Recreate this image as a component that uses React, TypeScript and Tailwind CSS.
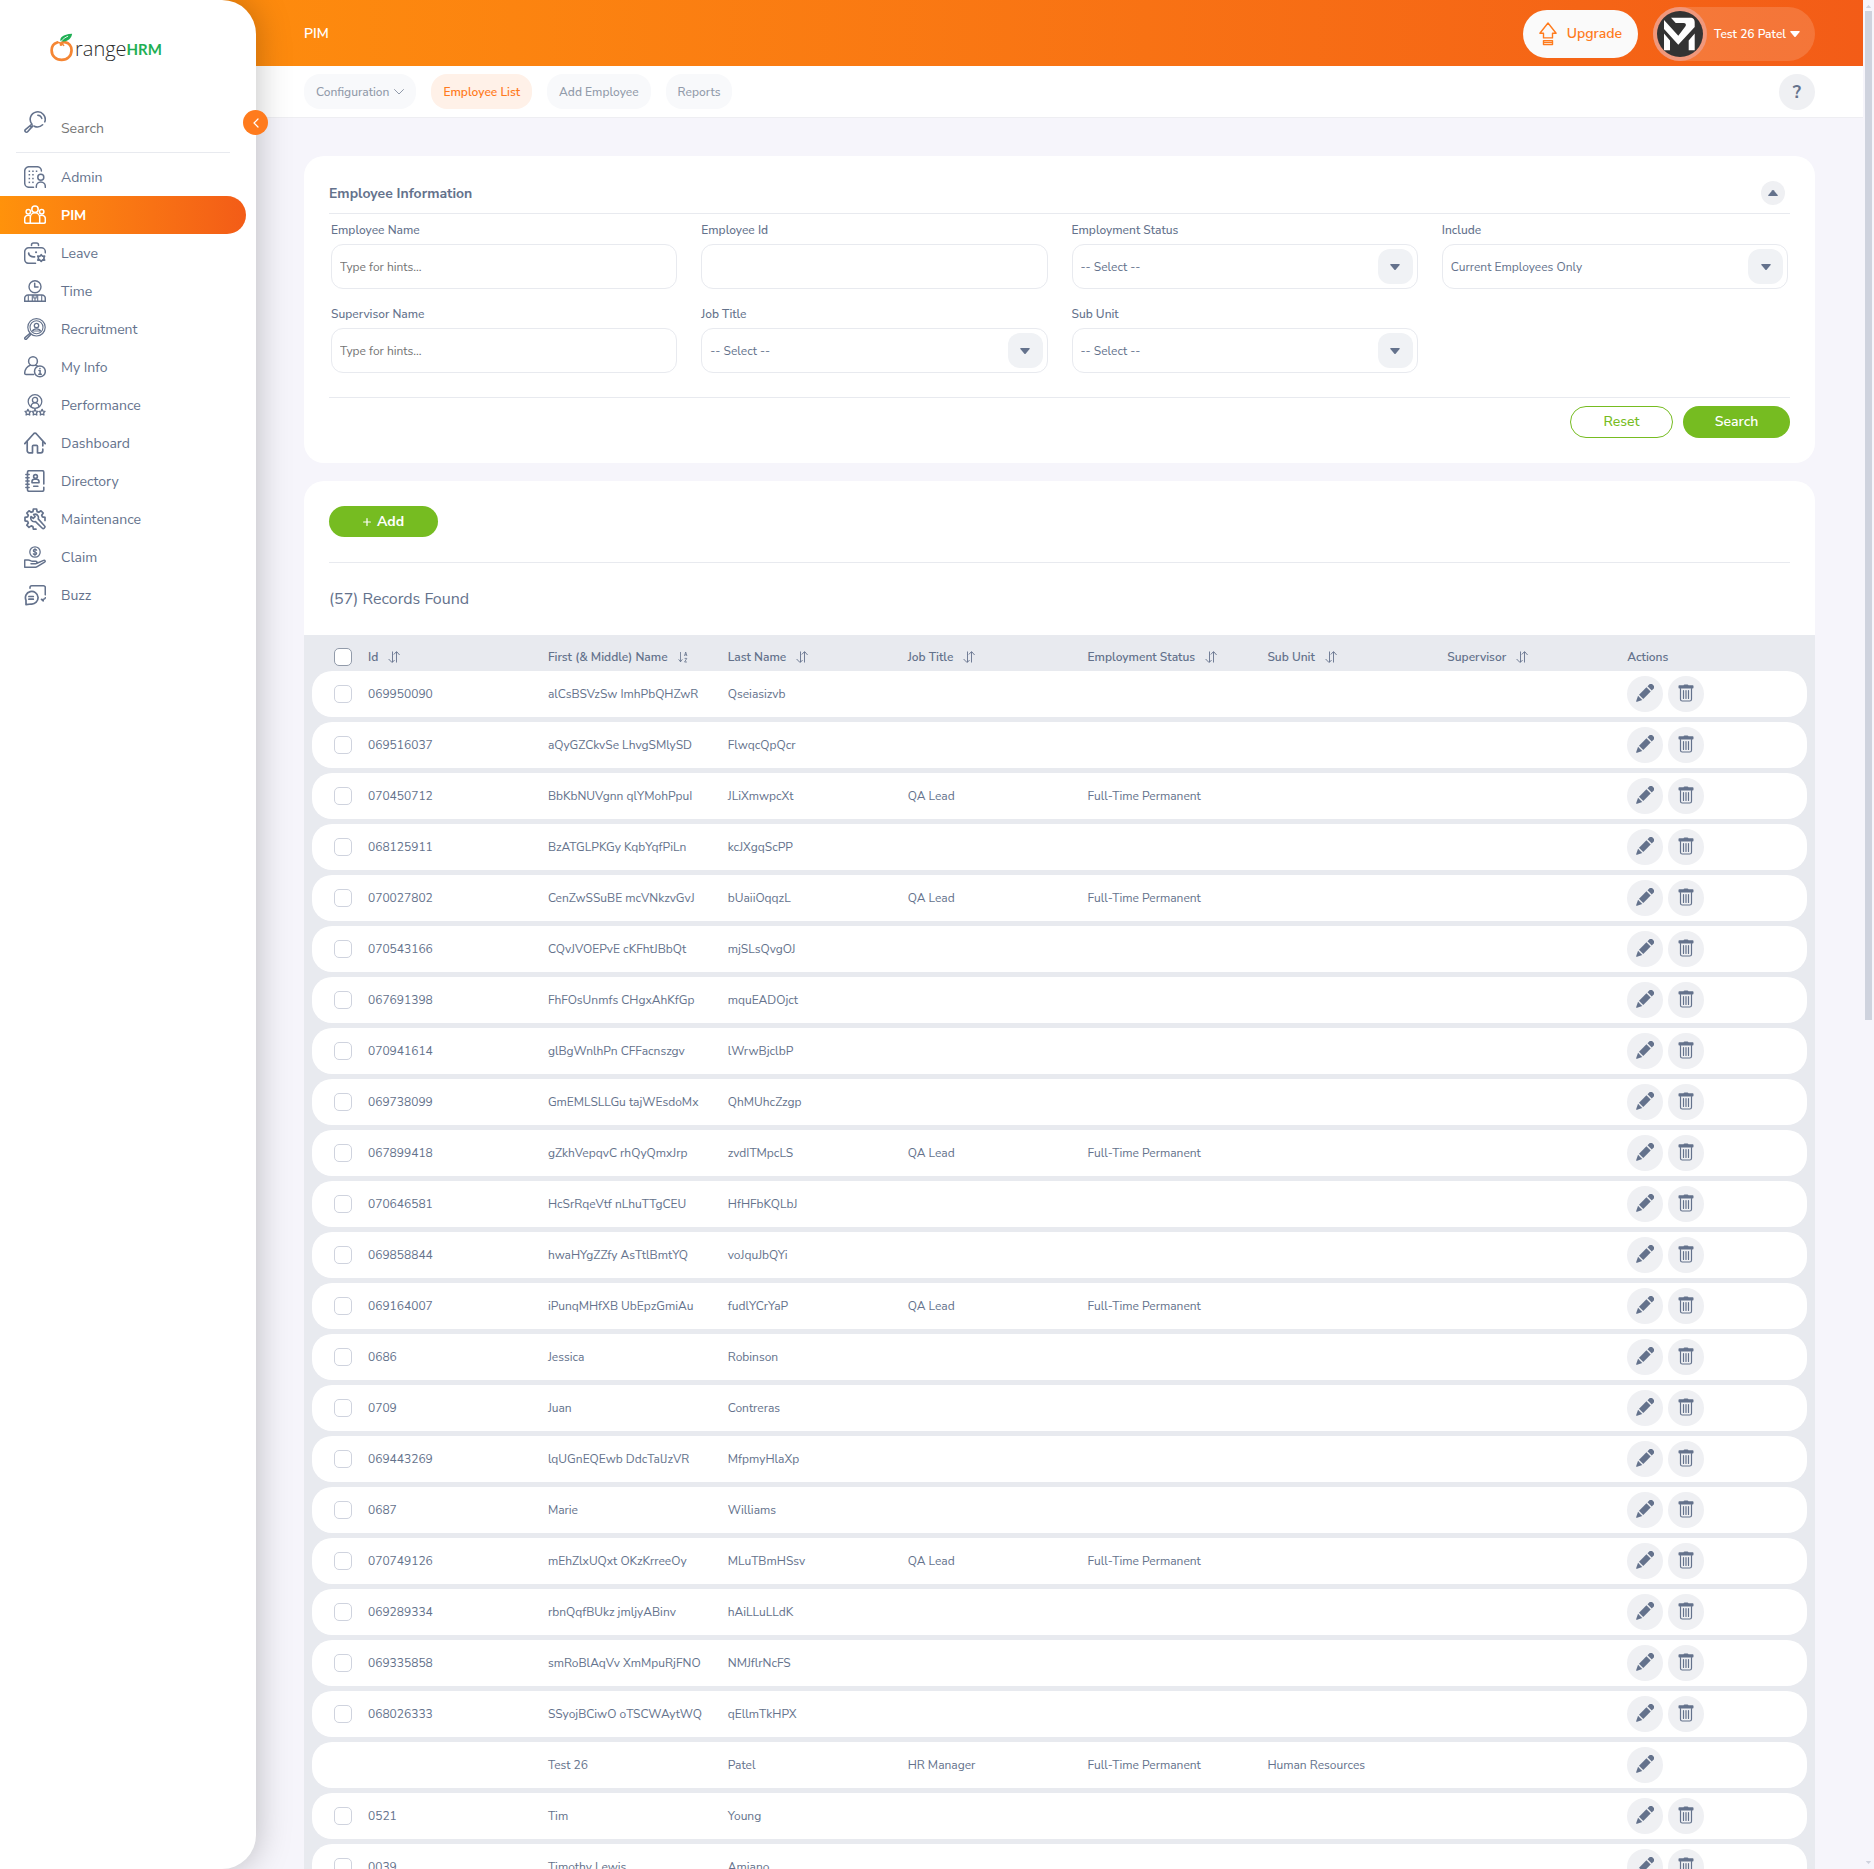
import React, { type ReactNode } from "react";

/* ---------- icons ---------- */

function MenuIcon({ children }: { children: ReactNode }) {
  return (
    <svg
      viewBox="0 0 22 22"
      className="size-[22px] shrink-0"
      fill="none"
      stroke="currentColor"
      strokeWidth="1.5"
      strokeLinecap="round"
      strokeLinejoin="round"
      aria-hidden="true"
    >
      {children}
    </svg>
  );
}

const SearchGlyph = (
  <MenuIcon>
    <path d="M8 13.200A7.500 7.500 0 1 1 20.800 10.800M18.600 13.800A7.500 7.500 0 0 1 10.200 15.200" strokeWidth="1.600" />
    <path d="M13.800 4.200a4.300 4.300 0 0 1 4 3.200" />
    <path d="M7.400 13.600l-6 5a1.500 1.500 0 0 0 0 2.100 1.500 1.500 0 0 0 2.200 0l5.200-5.800M6 14.800l1.700 1.600" strokeWidth="1.600" />
  </MenuIcon>
);

const AdminGlyph = (
  <MenuIcon>
    <path d="M9.500 21.300H5A4.300 4.300 0 0 1 .7 17V5A4.300 4.300 0 0 1 5 .7h8.200A4.300 4.300 0 0 1 17.400 5" />
    <g fill="currentColor" stroke="none">
      <rect x="4.600" y="4.500" width="1.500" height="1.500" />
      <rect x="8.200" y="4.500" width="1.500" height="1.500" />
      <rect x="11.800" y="4.500" width="1.500" height="1.500" />
      <rect x="4.600" y="8" width="1.500" height="1.500" />
      <rect x="8.200" y="8" width="1.500" height="1.500" />
      <rect x="4.600" y="11.800" width="1.500" height="1.500" />
      <rect x="8.200" y="11.800" width="1.500" height="1.500" />
      <rect x="4.600" y="15.600" width="1.500" height="1.500" />
      <rect x="8.200" y="15.600" width="1.500" height="1.500" />
    </g>
    <circle cx="16.800" cy="11.200" r="3" />
    <path d="M12.300 21.300v-.8a4.500 4.500 0 0 1 9 0v.8" />
  </MenuIcon>
);

const PimGlyph = (
  <MenuIcon>
    <circle cx="11" cy="5.300" r="3.200" />
    <circle cx="4.300" cy="7.700" r="2.200" />
    <circle cx="17.700" cy="7.700" r="2.200" />
    <path d="M6.300 19.300v-5.800a4.700 4.700 0 0 1 9.400 0v5.800z" />
    <path d="M6.300 19.300H2.200a1.500 1.500 0 0 1-1.500-1.500v-3.200a3.400 3.400 0 0 1 5.200-2.900M15.700 19.300h4.100a1.500 1.500 0 0 0 1.500-1.500v-3.200a3.400 3.400 0 0 0-5.200-2.900" />
  </MenuIcon>
);

const LeaveGlyph = (
  <MenuIcon>
    <path d="M7.500 3.600V3A2 2 0 0 1 9.500 1h3a2 2 0 0 1 2 2v.6" />
    <path d="M11.500 21.300H4.700a4 4 0 0 1-4-4V9.800a4 4 0 0 1 4-4h12.600a4 4 0 0 1 4 4v1" />
    <path d="M4.700 11.200c.2 2.500 2.600 4 5.800 3.700" strokeWidth="1.800" />
    <path d="M12 10.300h.1" strokeWidth="2" />
    <path d="M17.200 12.700l1.300 1.600 2.100-.2-.8 2 .8 2-2.100-.2-1.300 1.600-1.300-1.600-2.100.2.800-2-.8-2 2.100.2z" strokeWidth="1.600" />
  </MenuIcon>
);

const TimeGlyph = (
  <MenuIcon>
    <circle cx="11" cy="6.700" r="6" strokeWidth="1.400" />
    <path d="M10.700 3.300v3.800h3.300" />
    <path d="M.7 21.300v-2.800a3.500 3.500 0 0 1 3.500-3.500h13.600a3.500 3.500 0 0 1 3.500 3.500v2.800z" />
    <path d="M4.300 21v-5.500M8.300 15.200V21M13.700 15.200V21M17.700 21v-5.500M9.800 15.200v2.800h2.400v-2.800M11 18v3" strokeWidth="1.100" />
  </MenuIcon>
);

const RecruitmentGlyph = (
  <MenuIcon>
    <circle cx="12.500" cy="9.300" r="8.700" strokeWidth="1.200" />
    <circle cx="12.500" cy="9.300" r="6.500" strokeWidth="1.100" />
    <circle cx="12.500" cy="7.500" r="2.200" strokeWidth="1.300" />
    <path d="M8.400 13c.5-1.500 2-2.200 4.100-2.200s3.600.7 4.100 2.200z" strokeWidth="1.200" />
    <path d="M6 15.200l-5 4.400a1.100 1.100 0 0 0 0 1.500 1.100 1.100 0 0 0 1.600 0L7 16.300" strokeWidth="1.400" />
  </MenuIcon>
);

const MyInfoGlyph = (
  <MenuIcon>
    <circle cx="9" cy="5.200" r="4.400" />
    <path d="M6.200 9.200C3.300 10 .7 13.500.7 17.200c0 .8.500 1.300 1.300 1.300h7.600M11.700 9.200l1.900.9" />
    <circle cx="15.900" cy="15.400" r="5.400" />
    <path d="M15 14.500h1.100v3.700M14.800 18.200h2.600M15.900 12.400h.1" />
  </MenuIcon>
);

const PerformanceGlyph = (
  <MenuIcon>
    <circle cx="11" cy="7.500" r="6.800" strokeWidth="1.300" />
    <circle cx="11" cy="6" r="2.600" strokeWidth="1.300" />
    <path d="M7 12.800c.2-2.500 1.800-4 4-4s3.800 1.500 4 4" strokeWidth="1.300" />
    <path
      strokeWidth="1.300"
      d="M3.900 15.400l.9 1.700 2 .3-1.300 1.400.2 2.200-1.800-.9-1.800.9.200-2.200L1 17.400l2-.3zM11 15.400l.9 1.700 2 .3-1.300 1.400.2 2.200-1.800-.9-1.800.9.200-2.200-1.300-1.400 2-.3zM18.100 15.400l.9 1.700 2 .3-1.300 1.400.2 2.200-1.800-.9-1.800.9.200-2.200-1.300-1.400 2-.3z"
    />
  </MenuIcon>
);

const DashboardGlyph = (
  <MenuIcon>
    <path d="M.8 11.600L9.700 1.700a1.800 1.800 0 0 1 2.600 0l8.900 9.900" strokeWidth="1.700" />
    <path d="M3.200 9.600v9.200a2 2 0 0 0 2 2h3.300v-6.500a1 1 0 0 1 1-1h3a1 1 0 0 1 1 1v6.500h3.300a2 2 0 0 0 2-2v-1.600M18.800 9.800v4" strokeWidth="1.700" />
  </MenuIcon>
);

const DirectoryGlyph = (
  <MenuIcon>
    <path d="M19.800 14V2.200A1.500 1.500 0 0 0 18.300.7H5A1.500 1.500 0 0 0 3.500 2.200v17.600A1.500 1.500 0 0 0 5 21.300h13.300a1.500 1.500 0 0 0 1.500-1.500v-2.600" strokeWidth="1.600" />
    <path d="M1.800 4.500h3.400M1.800 7.800h3.400M1.800 11h3.400M1.800 14.200h3.400M1.800 17.500h3.400" strokeWidth="1.400" />
    <circle cx="11.500" cy="6.500" r="1.900" strokeWidth="1.600" />
    <path d="M8 12.700v-1.200a2.300 2.300 0 0 1 2.300-2.300h2.400a2.300 2.300 0 0 1 2.300 2.300v1.200zM9.700 16.300h4.200" strokeWidth="1.600" />
  </MenuIcon>
);

const MaintenanceGlyph = (
  <MenuIcon>
    <path d="M12 21.200h-2.600l-.5-2.600-1.700-.7-2.200 1.500-2.200-2.200 1.500-2.200-.7-1.700-2.600-.5V9.400l2.600-.5.700-1.700-1.500-2.200L5 2.800l2.200 1.500 1.700-.7.500-2.600h3.200l.5 2.600 1.700.7L17 2.800 19.200 5l-1.500 2.200.7 1.700 2.600.5v3" strokeWidth="1.700" />
    <path d="M7 8.500l2.300 1.800 1.800-1.600-1.500-2.300c1.800-.6 3.700.1 4.500 1.700.5 1 .4 1.900.1 2.800l6.200 6.800a1.600 1.600 0 0 1-2.300 2.300l-6.600-6.400c-1.600.4-3.200 0-4.100-1.500A4 4 0 0 1 7 8.500z" strokeWidth="1.600" />
  </MenuIcon>
);

const ClaimGlyph = (
  <MenuIcon>
    <circle cx="11" cy="6" r="5.200" strokeWidth="1.300" />
    <path d="M12.700 4.300c-.3-.6-.9-.9-1.700-.9-1 0-1.700.5-1.700 1.300S10 5.800 11 6s1.700.5 1.700 1.300S12 8.600 11 8.600s-1.500-.3-1.700-.9M11 2.600v6.800" strokeWidth="1.200" />
    <path d="M.7 14h3.600c1.800 0 2.500 1.300 4 1.300h3.400c.9 0 1.400.5 1.400 1.200s-.5 1.200-1.400 1.200H7M13 17.200l6.600-2.800c1.400-.4 2.200.9 1 1.700l-7.400 4.600a3 3 0 0 1-1.600.5H.7V14" />
  </MenuIcon>
);

const BuzzGlyph = (
  <MenuIcon>
    <path d="M6 4.200V3.400A1.700 1.700 0 0 1 7.700 1.700h11.600A1.900 1.900 0 0 1 21.300 3.600v7.200M21.300 13.800c-.2 1-1 1.500-2.100 1.500v1.600l-1.700-1.500" strokeWidth="1.600" />
    <path d="M2 20.600v-4.300A6.300 6.300 0 1 1 7.200 20z" strokeWidth="1.700" />
    <path d="M4.900 12.500h4.400M4.900 15.200h4.400" strokeWidth="1.700" />
  </MenuIcon>
);

function PencilIcon() {
  return (
    <svg viewBox="0 0 18 18" className="size-[18px]" fill="currentColor" aria-hidden="true">
      <g transform="translate(.2 17.800) rotate(-45)">
        <path d="M.6-.6L5.600-3v6L.6.600a.7.700 0 0 1 0-1.200z" />
        <path d="M7-3h10.500v6H7z" />
        <path d="M19-3h3.800c.6 0 1 .4 1 1v4c0 .6-.4 1-1 1H19z" />
      </g>
    </svg>
  );
}

function TrashIcon() {
  return (
    <svg viewBox="0 0 16 18" className="h-[18px] w-4" fill="currentColor" aria-hidden="true">
      <path d="M5.500 1.200A1.200 1.200 0 0 1 6.600.5h2.800a1.200 1.200 0 0 1 1.100.7h4.200c.5 0 .8.400.8.800v1.600c0 .5-.3.900-.8.900H1.300c-.5 0-.8-.4-.8-.9V2c0-.4.300-.8.800-.8z" />
      <path d="M2.500 4.500v10.700a1.800 1.800 0 0 0 1.800 1.800h7.400a1.800 1.800 0 0 0 1.800-1.800V4.500M5.500 6.500v8M8 6.500v8M10.500 6.500v8" fill="none" stroke="currentColor" strokeWidth="1.200" strokeLinecap="round" />
    </svg>
  );
}

function SortIcon() {
  return (
    <svg viewBox="0 0 12 12" className="h-3 w-3" fill="none" stroke="currentColor" strokeWidth="0.9" aria-hidden="true">
      <path d="M4.500.5v10.700M.6 8l3.100 3.200h.8L6.600 9M8.500 11.500V.8M5.800 3.500L8.300.8h.5L11.600 4" />
    </svg>
  );
}

function SortAlphaIcon() {
  return (
    <svg viewBox="0 0 12 12" className="h-3 w-3" fill="none" stroke="currentColor" strokeWidth="0.8" aria-hidden="true">
      <path d="M2.500 1v9.800M.6 8.300l1.900 2.500 1.900-2.500" />
      <path d="M6.500 5l1.200-4L8.900 5M6.900 3.800h1.600M6.600 7.400h2.200l-2.200 3.600h2.300" />
    </svg>
  );
}

function Caret({ up = false, className }: { up?: boolean; className: string }) {
  return (
    <svg viewBox="0 0 10 6" className={className} fill="currentColor" aria-hidden="true">
      <path d={up ? "M4.400.3a.8.8 0 0 1 1.200 0l4 4.600c.4.500.1 1.100-.5 1.100H.9c-.6 0-.9-.6-.5-1.100z" : "M4.400 5.700a.8.8 0 0 0 1.200 0l4-4.600C10 .6 9.700 0 9.100 0H.9C.3 0 0 .6.4 1.100z"} />
    </svg>
  );
}

function Logo() {
  return (
    <a href="#" aria-label="OrangeHRM" className="flex h-8 items-center text-[#2b2b2b]">
      <svg viewBox="0 0 26 30" className="h-[30px] w-[25px]" aria-hidden="true">
        <path d="M7.500 9.200C3.700 10.300 1.700 13.500 1.700 17.300c0 5.700 4.200 10.100 10.400 10.100s10.300-4.500 10.300-10.100c0-4.400-2.900-7.500-6.200-8.200-2.200-.4-4.200.5-4.800 2.400" fill="none" stroke="#f58634" strokeWidth="2.800" strokeLinecap="round" />
        <path d="M7.600 9.200c2.600-.2 5 .8 6.600 3.100" fill="none" stroke="#f58634" strokeWidth="1.600" strokeLinecap="round" />
        <path d="M11 8C9.800 4.400 13 1 23 .3c-.5 5.300-5.400 8.800-10.600 7.600z" fill="#1faf54" />
        <path d="M11.400 8.200c2-2.500 4.500-4.300 7.400-5.500" stroke="#fff" strokeWidth=".9" fill="none" />
      </svg>
      <span className="pt-0.5 font-['Open_Sans',Lato,sans-serif] text-xl leading-8 font-light">range</span>
      <span className="pt-0.5 font-[Lato,sans-serif] text-[15px] leading-8 font-bold text-[#1faf54]">HRM</span>
    </a>
  );
}

/* ---------- data ---------- */

const menu: { label: string; icon: ReactNode }[] = [
  { label: "Admin", icon: AdminGlyph },
  { label: "PIM", icon: PimGlyph },
  { label: "Leave", icon: LeaveGlyph },
  { label: "Time", icon: TimeGlyph },
  { label: "Recruitment", icon: RecruitmentGlyph },
  { label: "My Info", icon: MyInfoGlyph },
  { label: "Performance", icon: PerformanceGlyph },
  { label: "Dashboard", icon: DashboardGlyph },
  { label: "Directory", icon: DirectoryGlyph },
  { label: "Maintenance", icon: MaintenanceGlyph },
  { label: "Claim", icon: ClaimGlyph },
  { label: "Buzz", icon: BuzzGlyph },
];

type Employee = { id: string; first: string; last: string; job?: string; status?: string; unit?: string };

const QA = { job: "QA Lead", status: "Full-Time Permanent" };

const employees: Employee[] = [
  { id: "069950090", first: "alCsBSVzSw ImhPbQHZwR", last: "Qseiasizvb" },
  { id: "069516037", first: "aQyGZCkvSe LhvgSMlySD", last: "FlwqcQpQcr" },
  { id: "070450712", first: "BbKbNUVgnn qlYMohPpuI", last: "JLiXmwpcXt", ...QA },
  { id: "068125911", first: "BzATGLPKGy KqbYqfPiLn", last: "kcJXgqScPP" },
  { id: "070027802", first: "CenZwSSuBE mcVNkzvGvJ", last: "bUaiiOqqzL", ...QA },
  { id: "070543166", first: "CQvJVOEPvE cKFhtJBbQt", last: "mjSLsQvgOJ" },
  { id: "067691398", first: "FhFOsUnmfs CHgxAhKfGp", last: "mquEADOjct" },
  { id: "070941614", first: "glBgWnlhPn CFFacnszgv", last: "lWrwBjclbP" },
  { id: "069738099", first: "GmEMLSLLGu tajWEsdoMx", last: "QhMUhcZzgp" },
  { id: "067899418", first: "gZkhVepqvC rhQyQmxJrp", last: "zvdITMpcLS", ...QA },
  { id: "070646581", first: "HcSrRqeVtf nLhuTTgCEU", last: "HfHFbKQLbJ" },
  { id: "069858844", first: "hwaHYgZZfy AsTtlBmtYQ", last: "voJquJbQYi" },
  { id: "069164007", first: "iPunqMHfXB UbEpzGmiAu", last: "fudlYCrYaP", ...QA },
  { id: "0686", first: "Jessica", last: "Robinson" },
  { id: "0709", first: "Juan", last: "Contreras" },
  { id: "069443269", first: "lqUGnEQEwb DdcTalJzVR", last: "MfpmyHlaXp" },
  { id: "0687", first: "Marie", last: "Williams" },
  { id: "070749126", first: "mEhZlxUQxt OKzKrreeOy", last: "MLuTBmHSsv", ...QA },
  { id: "069289334", first: "rbnQqfBUkz jmljyABinv", last: "hAiLLuLLdK" },
  { id: "069335858", first: "smRoBlAqVv XmMpuRjFNO", last: "NMJflrNcFS" },
  { id: "068026333", first: "SSyojBCiwO oTSCWAytWQ", last: "qEllmTkHPX" },
  { id: "", first: "Test 26", last: "Patel", job: "HR Manager", status: "Full-Time Permanent", unit: "Human Resources" },
  { id: "0521", first: "Tim", last: "Young" },
  { id: "0039", first: "Timothy Lewis", last: "Amiano" },
];

const columns = ["Id", "First (& Middle) Name", "Last Name", "Job Title", "Employment Status", "Sub Unit", "Supervisor"];

/* ---------- pieces ---------- */

function Sidebar() {
  return (
    <aside className="relative z-10 flex w-64 shrink-0 flex-col rounded-r-[34px] bg-white shadow-[0_0_35px_rgba(0,0,0,0.25)]">
      <div className="pt-8 pl-[50px]">
        <Logo />
      </div>
      <button type="button" aria-label="Collapse menu" className="absolute top-[110px] -right-3 flex size-[25px] items-center justify-center rounded-full bg-[#ff7b1d] text-white">
        <svg viewBox="0 0 6 10" className="h-2.5 w-1.5" fill="none" stroke="currentColor" strokeWidth="1.200" strokeLinecap="round" strokeLinejoin="round" aria-hidden="true">
          <path d="M5 1L1 5l4 4" />
        </svg>
      </button>
      <label className="mt-[46px] mr-[26px] ml-4 flex h-[43px] items-start gap-[15px] border-b border-[#e8eaef] pl-2 text-[#64728c]">
        <span className="pt-px">{SearchGlyph}</span>
        <input type="text" placeholder="Search" aria-label="Search menu" className="mt-1 h-6 w-full min-w-0 bg-transparent pt-1 text-sm leading-5 outline-none placeholder:text-[#757575]" />
      </label>
      <nav className="mt-[5px] flex flex-col">
        {menu.map(({ label, icon }) => (
          <a
            key={label}
            href="#"
            className={
              label === "PIM"
                ? "mr-2.5 flex h-[38px] items-center gap-[15px] rounded-r-full bg-linear-to-r from-[#ff920b] to-[#f35c17] pl-6 text-sm font-bold text-white"
                : "mr-2.5 flex h-[38px] items-center gap-[15px] pl-6 text-sm text-[#64728c]"
            }
          >
            {icon}
            <span className="pt-0.5">{label}</span>
          </a>
        ))}
      </nav>
    </aside>
  );
}

function Header() {
  return (
    <header className="flex h-[66px] shrink-0 items-center justify-between bg-linear-to-r from-[#ff920b] to-[#f35c17] pt-0.5 pr-12 pl-[304px] text-white">
      <h1 className="text-sm leading-5 font-semibold">PIM</h1>
      <div className="flex items-center gap-[15px]">
        <button type="button" className="flex h-12 items-center gap-2.5 rounded-full bg-[#fafafa] px-4 text-sm font-semibold text-[#ff7b1d]">
          <svg viewBox="0 0 18 24" className="h-6 w-[18px]" fill="none" stroke="currentColor" strokeWidth="1.400" strokeLinejoin="round" aria-hidden="true">
            <path d="M9 1L.9 11.300h3.600v4.600h9v-4.600h3.600zM4.500 18.600h9v4h-9zM4.500 20.500h9" />
          </svg>
          Upgrade
        </button>
        <button type="button" className="flex h-[54px] items-center rounded-full bg-white/15 pr-[15px] text-xs font-semibold text-white">
          <span className="mr-[7px] flex size-[54px] items-center justify-center rounded-full bg-[#f0977b]">
            <svg viewBox="0 0 46 46" className="size-[46px]" role="img" aria-label="Profile picture">
              <circle cx="23" cy="23" r="23" fill="#333" />
              <g fill="#fff">
                <path d="M7 9l14.300 15.800L28.300 15.500c1.300-1.900.5-3.500-1.800-3.500h-7.800L14 6.700h19c3.500 0 4.700 2 4.700 4.800V16L21.300 33.700 7 18z" />
                <path d="M7 22.500l6 7v9.800H7zM37.700 22.500l-6 7v9.800h6z" />
              </g>
            </svg>
          </span>
          Test 26 Patel
          <Caret className="ml-1 h-1.5 w-2.5" />
        </button>
      </div>
    </header>
  );
}

function TopTabs() {
  const tab = "flex h-[35px] items-center rounded-2xl bg-[#f8f9fb] px-3 text-xs font-medium text-[#929baa]";
  return (
    <nav className="flex h-[52px] shrink-0 items-center justify-between border-b border-[#eeeef2] bg-white pr-12 pl-[304px]">
      <div className="flex gap-[15px]">
        <button type="button" className={tab}>
          Configuration
          <svg viewBox="0 0 10 6" className="ml-[5px] h-1.5 w-2.5" fill="none" stroke="currentColor" strokeLinecap="round" strokeLinejoin="round" aria-hidden="true">
            <path d="M.5.5L5 5 9.500.5" />
          </svg>
        </button>
        <a href="#" className="flex h-[35px] items-center rounded-2xl bg-[#fff1e8] px-3 text-xs font-semibold text-[#ff7b1d]">
          Employee List
        </a>
        <a href="#" className={tab}>Add Employee</a>
        <a href="#" className={tab}>Reports</a>
      </div>
      <button type="button" aria-label="Help" className="flex size-9 items-center justify-center rounded-full bg-[#eff0f3] text-lg font-bold text-[#64728c]">
        ?
      </button>
    </nav>
  );
}

function TextField({ id, label, placeholder }: { id: string; label: string; placeholder?: string }) {
  return (
    <div className="flex flex-col gap-1.5">
      <label htmlFor={id} className="text-xs leading-4 font-medium text-[#64728c]">{label}</label>
      <input id={id} type="text" placeholder={placeholder} className="h-[45px] w-full rounded-xl border border-[#e8eaef] bg-white px-2 text-xs outline-none placeholder:text-[#757575]" />
    </div>
  );
}

function SelectField({ id, label, value }: { id: string; label: string; value: string }) {
  return (
    <div className="flex flex-col gap-1.5">
      <label htmlFor={id} className="text-xs leading-4 font-medium text-[#64728c]">{label}</label>
      <div className="relative">
        <select id={id} className="h-[45px] w-full appearance-none rounded-xl border border-[#e8eaef] bg-white px-2 text-xs text-[#64728c] outline-none">
          <option>{value}</option>
        </select>
        <span className="pointer-events-none absolute inset-y-[5px] right-[5px] flex w-[35px] items-center justify-center rounded-xl bg-[#f0f2f5] text-[#64728c]">
          <Caret className="h-1.5 w-2.5" />
        </span>
      </div>
    </div>
  );
}

function FilterCard() {
  return (
    <section className="rounded-[20px] bg-white p-[25px]">
      <div className="flex h-[33px] items-start justify-between border-b border-[#e8eaef]">
        <h2 className="text-sm leading-[26px] font-bold text-[#64728c]">Employee Information</h2>
        <button type="button" aria-label="Hide filters" className="mr-[5px] flex size-6 items-center justify-center rounded-full bg-[#eff0f3] text-[#64728c]">
          <Caret up className="h-1.5 w-2.5" />
        </button>
      </div>
      <div className="grid grid-cols-4 gap-x-6 gap-y-[17px] px-0.5 pt-2 pb-6">
        <TextField id="employee-name" label="Employee Name" placeholder="Type for hints..." />
        <TextField id="employee-id" label="Employee Id" />
        <SelectField id="employment-status" label="Employment Status" value="-- Select --" />
        <SelectField id="include" label="Include" value="Current Employees Only" />
        <TextField id="supervisor-name" label="Supervisor Name" placeholder="Type for hints..." />
        <SelectField id="job-title" label="Job Title" value="-- Select --" />
        <SelectField id="sub-unit" label="Sub Unit" value="-- Select --" />
      </div>
      <div className="flex justify-end gap-2.5 border-t border-[#e8eaef] pt-2">
        <button type="button" className="h-8 w-[103px] rounded-full border border-[#76bc21] bg-white text-sm font-medium text-[#76bc21]">Reset</button>
        <button type="button" className="h-8 w-[107px] rounded-full bg-[#76bc21] text-sm font-semibold text-white">Search</button>
      </div>
    </section>
  );
}

function Tick({ label, dark = false }: { label: string; dark?: boolean }) {
  return (
    <input
      type="checkbox"
      aria-label={label}
      className={
        dark
          ? "block size-[18px] appearance-none rounded-[5px] border border-[#929baa] bg-white"
          : "block size-[18px] appearance-none rounded-[5px] border border-[#cfd3de] bg-white"
      }
    />
  );
}

function RoundButton({ label, children }: { label: string; children: ReactNode }) {
  return (
    <button type="button" aria-label={label} className="flex size-9 items-center justify-center rounded-full bg-[#eff0f3] pb-0.5 text-[#64728c]">
      {children}
    </button>
  );
}

function EmployeeTable() {
  return (
    <div className="bg-[#e8eaef] px-2">
      <table className="w-full table-fixed border-separate border-spacing-x-0 border-spacing-y-[5px] text-left text-xs text-[#64728c]">
        <colgroup>
          <col className="w-14" />
          {columns.map((c) => (
            <col key={c} />
          ))}
          <col />
        </colgroup>
        <thead>
          <tr className="h-[26px]">
            <th className="p-0 pl-[22px] align-bottom">
              <Tick dark label="Select all" />
            </th>
            {columns.map((c, i) => (
              <th key={c} className="p-0 align-bottom font-semibold">
                <button type="button" className="flex items-center gap-2.5 leading-[18px] whitespace-nowrap">
                  {c}
                  {i === 1 ? <SortAlphaIcon /> : <SortIcon />}
                </button>
              </th>
            ))}
            <th className="p-0 align-bottom leading-[18px] font-semibold">Actions</th>
          </tr>
        </thead>
        <tbody>
          {employees.map((e) => (
            <tr key={e.first} className="h-[46px] bg-white">
              <td className="rounded-l-[20px] p-0 pl-[22px]">{e.id && <Tick label={`Select ${e.first}`} />}</td>
              <td className="p-0">{e.id}</td>
              <td className="p-0 whitespace-nowrap">{e.first}</td>
              <td className="p-0">{e.last}</td>
              <td className="p-0">{e.job}</td>
              <td className="p-0">{e.status}</td>
              <td className="p-0">{e.unit}</td>
              <td className="p-0" />
              <td className="rounded-r-[20px] p-0">
                <div className="flex gap-[5px]">
                  <RoundButton label="Edit"><PencilIcon /></RoundButton>
                  {e.id && <RoundButton label="Delete"><TrashIcon /></RoundButton>}
                </div>
              </td>
            </tr>
          ))}
        </tbody>
      </table>
    </div>
  );
}

function ListCard() {
  return (
    <section className="rounded-t-[20px] bg-white">
      <div className="px-[25px] pt-[25px]">
        <div className="border-b border-[#e8eaef] pb-[25px]">
          <button type="button" className="flex h-[31px] w-[109px] items-center justify-center gap-1.5 rounded-full bg-[#76bc21] text-sm font-bold text-white">
            <svg viewBox="0 0 8 8" className="size-2" stroke="currentColor" strokeWidth="1.200" strokeLinecap="round" aria-hidden="true">
              <path d="M4 .6v6.800M.6 4h6.800" />
            </svg>
            Add
          </button>
        </div>
        <p className="flex h-[72px] items-center text-base text-[#64728c]">(57) Records Found</p>
      </div>
      <EmployeeTable />
    </section>
  );
}

function ScrollRail() {
  return (
    <div className="flex w-[11px] shrink-0 flex-col items-center bg-[#f6f5fb] text-[#cfd3de]" aria-hidden="true">
      <Caret up className="mt-[5px] mb-[3px] h-[3px] w-[5px]" />
      <div className="w-[7px] basis-[54%] bg-[#cfd3de]" />
      <Caret className="mt-auto mb-[5px] h-[3px] w-[5px]" />
    </div>
  );
}

export default function App() {
  return (
    <div className="flex h-screen overflow-hidden bg-[#f6f5fb] font-['Nunito_Sans',Lato,sans-serif]">
      <Sidebar />
      <div className="-ml-64 flex min-w-0 flex-1 flex-col">
        <Header />
        <TopTabs />
        <main className="flex min-h-0 flex-1 flex-col gap-[18px] overflow-hidden pt-[38px] pr-12 pl-[304px]">
          <div className="shrink-0"><FilterCard /></div>
          <div className="shrink-0"><ListCard /></div>
        </main>
      </div>
      <ScrollRail />
    </div>
  );
}
